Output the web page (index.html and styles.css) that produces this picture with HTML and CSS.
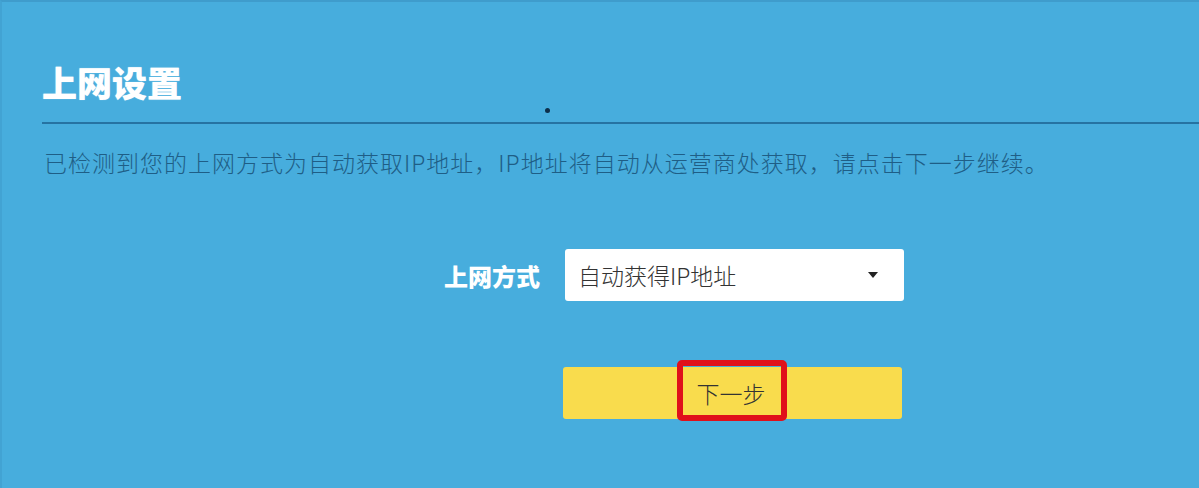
FILE: index.html
```html
<!DOCTYPE html>
<html lang="zh-CN">
<head>
<meta charset="utf-8">
<title>上网设置</title>
<link rel="stylesheet" href="styles.css">
</head>
<body>
<div class="page">
  <div class="header">
    <h1 class="title">上网设置</h1>
    <span class="dot"></span>
  </div>
  <p class="desc">已检测到您的上网方式为自动获取IP地址，IP地址将自动从运营商处获取，请点击下一步继续。</p>
  <div class="form">
    <div class="row">
      <label class="label">上网方式</label>
      <div class="select">
        <span class="select-text">自动获得IP地址</span>
        <span class="caret"></span>
      </div>
    </div>
    <div class="row row-btn">
      <div class="btn">
        <span class="btn-text">下一步</span>
        <span class="highlight"></span>
      </div>
    </div>
  </div>
</div>
</body>
</html>
```

FILE: styles.css
```css
html, body {
  margin: 0;
  padding: 0;
}
body {
  width: 1199px;
  height: 488px;
  overflow: hidden;
  background: #47addd;
  font-family: "Noto Sans CJK SC", "Noto Sans", sans-serif;
}
.page {
  height: 488px;
  box-sizing: border-box;
  border-top: 2px solid #3f9ccc;
  border-left: 2px solid #42a3d3;
  padding-left: 40px;
}
.header {
  position: relative;
  height: 120px;
  border-bottom: 2px solid #2673a2;
  box-sizing: content-box;
}
.title {
  margin: 0;
  padding-top: 56px;
  font-size: 35px;
  line-height: 48px;
  font-weight: 900;
  color: #ffffff;
  text-shadow: 0 0 1px rgba(255,255,255,0.6);
}
.dot {
  position: absolute;
  left: 503px;
  top: 106px;
  width: 5px;
  height: 5px;
  border-radius: 50%;
  background: #0d2f4a;
}
.desc {
  margin: 22px 0 0 2px;
  font-size: 23px;
  font-weight: 300;
  line-height: 32px;
  color: #1f5e86;
  letter-spacing: 1px;
  white-space: nowrap;
}
.form {
  padding-left: 402px;
  margin-top: 71px;
}
.row {
  display: flex;
  align-items: center;
  gap: 25px;
}
.label {
  width: 96px;
  font-size: 24px;
  font-weight: 900;
  color: #ffffff;
  white-space: nowrap;
}
.select {
  width: 339px;
  height: 52px;
  box-sizing: border-box;
  background: #ffffff;
  border-radius: 3px;
  display: flex;
  align-items: center;
  justify-content: space-between;
  padding: 0 26px 0 13px;
}
.select-text {
  font-size: 23px;
  font-weight: 300;
  color: #333333;
}
.caret {
  width: 0;
  height: 0;
  border-left: 5px solid transparent;
  border-right: 5px solid transparent;
  border-top: 6px solid #222222;
}
.row-btn {
  margin-top: 66px;
  padding-left: 119px;
}
.btn {
  position: relative;
  width: 339px;
  height: 52px;
  background: #f9dc4d;
  border-radius: 3px;
  display: flex;
  align-items: center;
  justify-content: center;
}
.btn-text {
  font-size: 23px;
  font-weight: 300;
  color: #333333;
  margin-left: -3px;
}
.highlight {
  position: absolute;
  left: 114px;
  top: -7px;
  width: 110px;
  height: 61px;
  box-sizing: border-box;
  border: 6px solid #e0101a;
  border-radius: 5px;
}
```
